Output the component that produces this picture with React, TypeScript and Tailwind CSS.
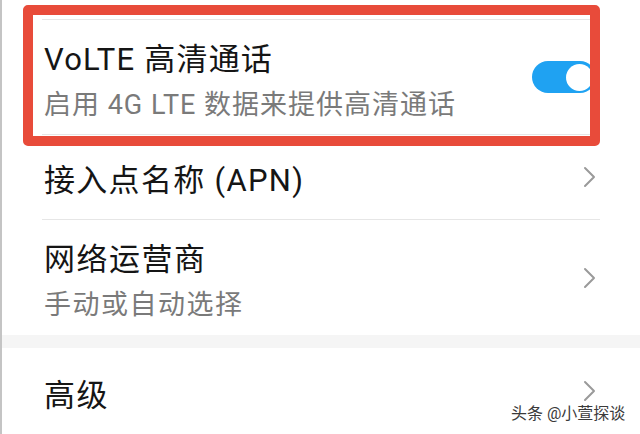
import React from 'react';

const font = { fontFamily: 'Roboto, "Noto Sans CJK SC", sans-serif' };

function Chevron() {
  return (
    <svg width="14" height="22" viewBox="0 0 14 22" fill="none" className="shrink-0">
      <polyline points="3,2 12,11 3,20" stroke="#9a9a9a" strokeWidth="2" strokeLinecap="round" strokeLinejoin="round" />
    </svg>
  );
}

function Toggle() {
  return (
    <div className="w-[64px] h-[32px] rounded-full bg-[#1fa2f2] flex items-center justify-end pr-[3px] shrink-0">
      <div className="w-[27px] h-[27px] rounded-full bg-white" />
    </div>
  );
}

export default function App() {
  return (
    <div style={font} className="relative w-[640px] h-[434px] overflow-hidden bg-white border-l-2 border-[#c4c4c4]">
      <div className="pl-[40px] pr-[40px]">
        <div className="h-[20px] border-b border-[#e6e6e6]" />

        {/* VoLTE */}
        <div className="h-[115px] border-b border-[#e6e6e6] flex items-center justify-between pl-[2px] pr-[4px]">
          <div className="flex flex-col gap-[3px] pt-[10px]">
            <span className="text-[31px] leading-[42px] tracking-[1.2px] text-[#151515]">VoLTE 高清通话</span>
            <span className="text-[27px] leading-[42px] tracking-[1px] text-[#7a7a7a]">启用 4G LTE 数据来提供高清通话</span>
          </div>
          <Toggle />
        </div>

        {/* APN */}
        <div className="h-[85px] border-b border-[#e6e6e6] flex items-center justify-between pl-[2px] pr-[4px]">
          <span className="text-[31px] leading-[42px] tracking-[1.3px] text-[#151515] pt-[7px]">接入点名称 (APN)</span>
          <Chevron />
        </div>

        {/* 运营商 */}
        <div className="h-[115px] flex items-center justify-between pl-[2px] pr-[4px]">
          <div className="flex flex-col gap-[3px] pt-[10px]">
            <span className="text-[31px] leading-[42px] tracking-[1.5px] text-[#151515]">网络运营商</span>
            <span className="text-[27px] leading-[42px] tracking-[1.5px] text-[#7a7a7a]">手动或自动选择</span>
          </div>
          <Chevron />
        </div>
      </div>

      <div className="h-[13px] bg-[#f5f5f5]" />

      <div className="pl-[40px] pr-[40px]">
        <div className="h-[86px] flex items-center justify-between pl-[2px] pr-[4px]">
          <span className="text-[31px] leading-[42px] tracking-[1.5px] text-[#151515] pt-[10px]">高级</span>
          <Chevron />
        </div>
      </div>

      {/* red highlight annotation */}
      <div className="absolute left-[21px] top-[5px] w-[577px] h-[141px] border-[10px] border-[#e84b3a] rounded-[5px]" />

      {/* watermark */}
      <div className="absolute left-[509px] top-[403px] text-[16px] leading-[21px] text-[#3a3a3a] [text-shadow:0_0_2px_#fff,0_0_2px_#fff]">
        头条 @小萱探谈
      </div>
    </div>
  );
}
